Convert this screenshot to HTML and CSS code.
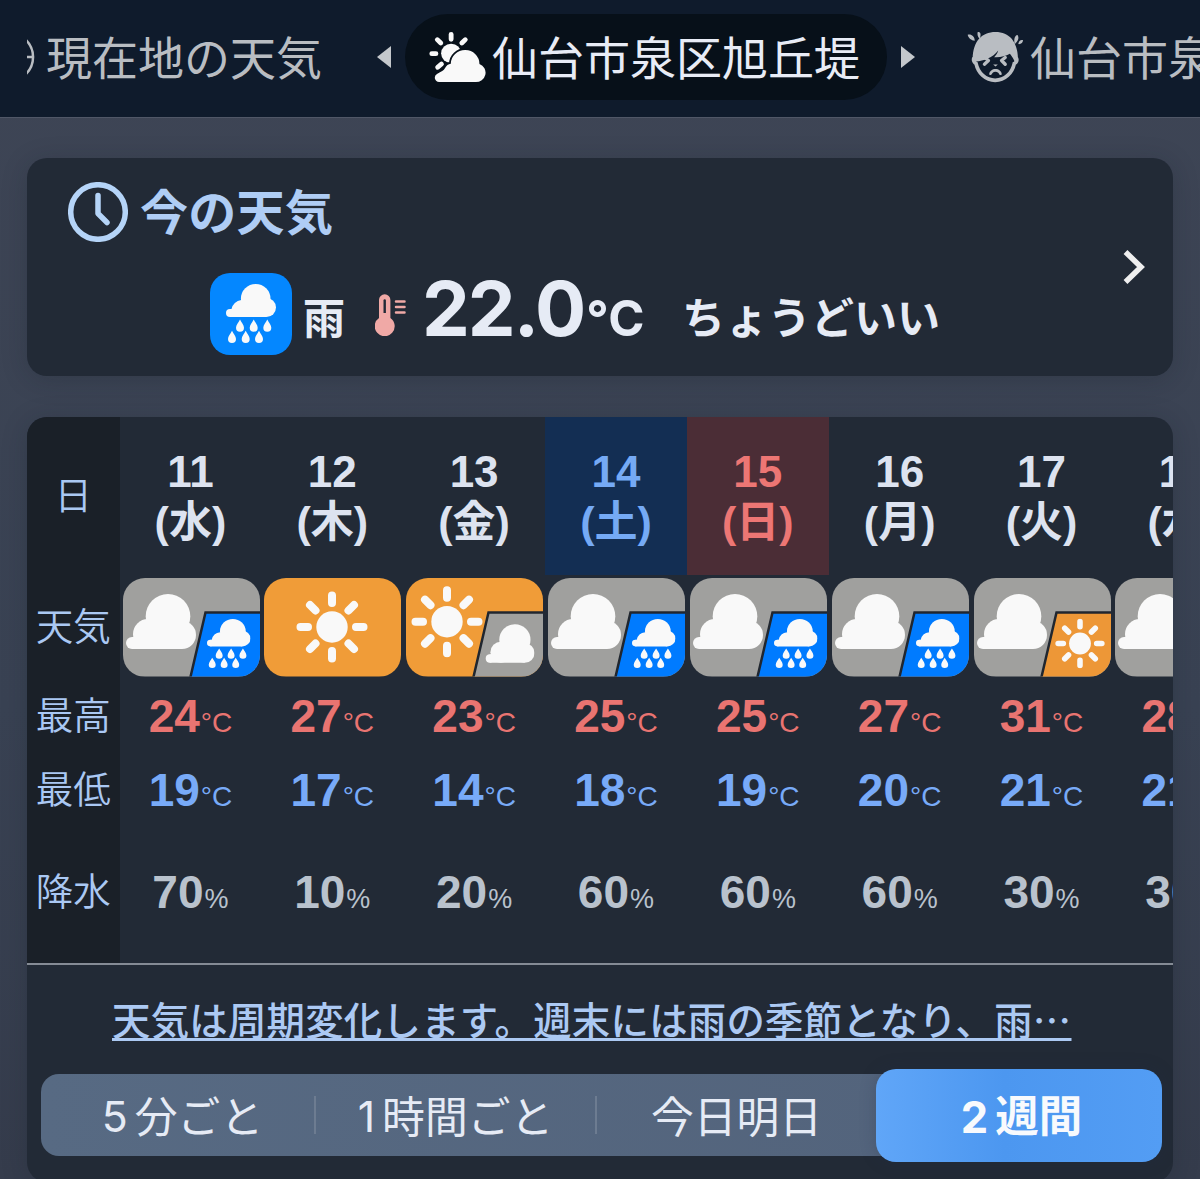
FILE: index.html
```html
<!DOCTYPE html>
<html lang="ja">
<head>
<meta charset="utf-8">
<title>天気</title>
<link rel="stylesheet" href="styles.css">
</head>
<body>
<svg class="defs" aria-hidden="true">
  <symbol id="cloud" viewBox="0 0 70 55">
    <circle cx="42" cy="22.3" r="22.3"/><circle cx="22" cy="40" r="15"/><circle cx="6" cy="49" r="6"/><circle cx="56" cy="41" r="14"/>
    <path d="M6 43h16V30h34v25H6z"/>
  </symbol>
  <symbol id="rain" viewBox="0 0 50 59" preserveAspectRatio="none">
    <circle cx="29.700" cy="14.800" r="14.800"/><circle cx="40.500" cy="23.500" r="9.500"/><circle cx="4" cy="29" r="4"/>
    <path d="M4 25h1.500a11 11 0 0 1 9.700-9h25v17H4z"/>
    <path id="drop" d="M14 35.500c1.500 3 4 5.500 4 8.300a4 4 0 0 1-8 0c0-2.800 2.500-5.300 4-8.300z"/>
    <use href="#drop" x="13.700"/><use href="#drop" x="27.300"/>
    <use href="#drop" x="-8" y="11.200"/><use href="#drop" x="5.700" y="11.200"/><use href="#drop" x="19" y="11.200"/>
  </symbol>
  <symbol id="sun" viewBox="0 0 72 72">
    <circle cx="36" cy="36" r="15.700"/>
    <path fill="none" stroke="#f9f9f9" stroke-width="8" stroke-linecap="round" d="M36 4.500v7.500M36 60v7.500M4.500 36H12M60 36h7.500M14 14l5.500 5.500M52.500 52.500L58 58M58 14l-5.500 5.500M19.500 52.500L14 58"/>
  </symbol>
  <symbol id="cloud-rain" viewBox="0 0 137 98.500">
    <path fill="#a0a09e" d="M0 0h137v99H0z"/><use href="#cloud" x="3" y="16" width="70" height="55"/>
    <path fill="#007bff" stroke="#20262f" stroke-width="2.500" d="M82.500 34.500H140V101H67z"/><use href="#rain" x="84" y="41" width="43.500" height="49"/>
  </symbol>
  <symbol id="cloud-sun" viewBox="0 0 137 98.500">
    <path fill="#a0a09e" d="M0 0h137v99H0z"/><use href="#cloud" x="3" y="16" width="70" height="55"/>
    <path fill="#ed9737" stroke="#20262f" stroke-width="2.500" d="M82.500 34.500H140V101H67z"/><use href="#sun" x="81" y="40.500" width="50" height="50"/>
  </symbol>
  <symbol id="sun-cloud" viewBox="0 0 137 98.500">
    <path fill="#f09c38" d="M0 0h137v99H0z"/><use href="#sun" x="5" y="7.700" width="72" height="72"/>
    <path fill="#a0a09e" stroke="#20262f" stroke-width="2.500" d="M82.500 34.500H140V101H67z"/><use href="#cloud" x="79.500" y="46" width="49" height="39"/>
  </symbol>
  <symbol id="sunny" viewBox="0 0 137 98.500">
    <path fill="#f09c38" d="M0 0h137v99H0z"/><use href="#sun" x="32" y="13" width="72" height="72"/>
  </symbol>
</svg>

<header class="places">
  <div class="place place-prev">
    <svg class="place-edge" viewBox="0 0 8 36"><path d="M-1 1a24 24 0 0 1 0 34M0 18h7"/></svg>
    <span>現在地の天気</span>
  </div>
  <svg class="arrow" viewBox="0 0 14 22"><path d="M0 11L14 0v22z"/></svg>
  <div class="place place-current">
    <svg class="place-icon" viewBox="0 0 168 156" preserveAspectRatio="none">
      <circle cx="67" cy="67" r="29" fill="#f9f9f9"/>
      <path stroke="#f9f9f9" stroke-width="14" stroke-linecap="round" d="M67 10v15M11 68h12M27 26l10 10M108 26L98 36M39 99l-11 10"/>
      <path fill="#f9f9f9" stroke="#071019" stroke-width="10" paint-order="stroke" d="M32 153a13 13 0 0 1-6-24c13-7 20-10 23-17c4-9 10-13 17-14A41 41 0 1 1 149 99a28 28 0 0 1-12 54z"/>
    </svg>
    <span>仙台市泉区旭丘堤</span>
  </div>
  <svg class="arrow" viewBox="0 0 14 22"><path d="M14 11L0 0v22z"/></svg>
  <div class="place place-next">
    <svg class="face" viewBox="0 0 170 155">
      <path fill="none" stroke="#b9bdc2" stroke-width="11" d="M21 80c-4 8 2 15 6 17c6 28 28 50 57 50s51-22 57-50c6-3 10-10 6-17"/>
      <path fill="#b9bdc2" d="M17 83C18 30 44 3 85 3s66 28 67 80l-10 8c-4-9-9-17-14-23c-14 8-29 11-47 10c5-5 10-12 12-20c-16 22-43 31-67 33z"/>
      <path fill="none" stroke="#b9bdc2" stroke-width="10" stroke-linejoin="round" stroke-linecap="round" d="M52 79l12 9l-12 11M114 79l-11 9l11 11"/>
      <path fill="#b9bdc2" d="M66 130c2-22 36-22 38 0c-5 3-8 0-10-5c-6-5-13-5-18 0c-2 5-6 8-10 5z"/>
      <path fill="#b9bdc2" d="M2 11C12 7 24 17 23 29C13 28 4 21 2 11zM32 3c8-2 11 5 6 21c-6-6-8-14-6-21zM142 40c-3-16 1-28 9-28c5 9 2 17-9 28zM153 39c1-9 7-14 14-12c0 8-6 13-14 12zM78 100h14l-7 6z"/>
    </svg>
    <span>仙台市泉</span>
  </div>
</header>

<main>
  <section class="card now">
    <div class="now-body">
      <h1 class="now-title">
        <svg class="clock" viewBox="0 0 60 60"><circle cx="30" cy="30" r="27.300"/><path d="M30 13.500v18l9 9"/></svg>
        <span>今の天気</span>
      </h1>
      <div class="now-row">
        <div class="now-icon"><svg viewBox="0 0 50 59" fill="#f9f9f9"><use href="#rain" width="50" height="59"/></svg></div>
        <span class="now-kind">雨</span>
        <svg class="thermo" viewBox="0 0 31 42"><path fill="#f0a9a6" d="M4 6a5.700 5.700 0 0 1 11.400 0v18a10 10 0 1 1-11.400 0z"/><path fill="#222a36" d="M8.500 6.500a1.200 1.200 0 0 1 2.400 0V19H8.500z"/><path stroke="#f0a9a6" stroke-width="2.500" stroke-linecap="round" d="M21 7.500h8.500M21 13h8.500M21 18.500h8.500"/></svg>
        <span class="now-temp">22.0<small>°C</small></span>
        <span class="now-feel">ちょうどいい</span>
      </div>
    </div>
    <svg class="chevron" viewBox="0 0 22 36"><path d="M2.500 3L18 18L2.500 33"/></svg>
  </section>

  <section class="card forecast">
    <div class="table">
      <div class="labels"><span>日</span><span>天気</span><span>最高</span><span>最低</span><span>降水</span></div>
      <div class="day"><div class="date">11<br><span>(水)</span></div><svg class="chip"><use href="#cloud-rain"/></svg><p class="hi">24<small>°C</small></p><p class="lo">19<small>°C</small></p><p class="pop">70<small>%</small></p></div>
      <div class="day"><div class="date">12<br><span>(木)</span></div><svg class="chip"><use href="#sunny"/></svg><p class="hi">27<small>°C</small></p><p class="lo">17<small>°C</small></p><p class="pop">10<small>%</small></p></div>
      <div class="day"><div class="date">13<br><span>(金)</span></div><svg class="chip"><use href="#sun-cloud"/></svg><p class="hi">23<small>°C</small></p><p class="lo">14<small>°C</small></p><p class="pop">20<small>%</small></p></div>
      <div class="day"><div class="date sat">14<br><span>(土)</span></div><svg class="chip"><use href="#cloud-rain"/></svg><p class="hi">25<small>°C</small></p><p class="lo">18<small>°C</small></p><p class="pop">60<small>%</small></p></div>
      <div class="day"><div class="date sun">15<br><span>(日)</span></div><svg class="chip"><use href="#cloud-rain"/></svg><p class="hi">25<small>°C</small></p><p class="lo">19<small>°C</small></p><p class="pop">60<small>%</small></p></div>
      <div class="day"><div class="date">16<br><span>(月)</span></div><svg class="chip"><use href="#cloud-rain"/></svg><p class="hi">27<small>°C</small></p><p class="lo">20<small>°C</small></p><p class="pop">60<small>%</small></p></div>
      <div class="day"><div class="date">17<br><span>(火)</span></div><svg class="chip"><use href="#cloud-sun"/></svg><p class="hi">31<small>°C</small></p><p class="lo">21<small>°C</small></p><p class="pop">30<small>%</small></p></div>
      <div class="day"><div class="date">18<br><span>(水)</span></div><svg class="chip"><use href="#cloud-sun"/></svg><p class="hi">28<small>°C</small></p><p class="lo">21<small>°C</small></p><p class="pop">30<small>%</small></p></div>
    </div>
    <a class="comment">天気は周期変化します。週末には雨の季節となり、雨…</a>
    <nav class="tabs">
      <span class="tab tab-5m"><b>5</b>分ごと</span>
      <span class="tab tab-1h"><b>1</b>時間ごと</span>
      <span class="tab tab-today">今日明日</span>
      <span class="tab tab-active"><b>2</b>週間</span>
    </nav>
  </section>
</main>
</body>
</html>
```
FILE: styles.css
```css
* { box-sizing: border-box; }
html, body { height: 1179px; overflow: hidden; }
body {
  margin: 0;
  background: linear-gradient(#3e4555, #394253 60%, #353c4c);
  color: #e6ebf5;
  font-family: "Noto Sans CJK JP", sans-serif;
}
svg { display: block; flex: none; }
.defs { position: absolute; width: 0; height: 0; }
p { margin: 0; }

.places {
  display: flex;
  align-items: center;
  height: 118px;
  padding: 0 0 4px 27px;
  overflow: hidden;
  background: #0f1b2c;
  border-bottom: 1.500px solid #505767;
  color: #b9bdc2;
  font-size: 46px;
  line-height: 60px;
  white-space: nowrap;
}
.place { display: flex; align-items: center; flex: none; }
.place span { margin-top: -4px; }
.place-prev { width: 350px; }
.place-edge { width: 8px; height: 36px; margin-right: 11px; overflow: hidden; fill: none; stroke: #b9bdc2; stroke-width: 2.500; }
.arrow { width: 14px; height: 22px; fill: #c4c8cc; }
.place-current {
  width: 482px;
  height: 86px;
  margin: 0 14px;
  padding-left: 23px;
  border-radius: 43px;
  background: #071019;
  color: #e8ecf6;
}
.place-icon { width: 58px; height: 52px; margin-right: 6px; }
.place-next { margin-left: 52px; }
.face { width: 57px; height: 52px; margin-right: 6px; }

main { padding: 40px 27px 0; }
.card { border-radius: 20px; background: #222a36; box-shadow: 0 4px 26px rgba(20, 26, 36, .22); }
.now { display: flex; align-items: center; justify-content: space-between; height: 218px; padding: 0 28px 0 41px; }
.now-body { height: 171px; }
.now-title { display: flex; align-items: center; gap: 12px; height: 60px; margin: 0; color: #afcdf5; font-size: 48px; font-weight: 600; line-height: 60px; }
.now-title span { margin-top: -6px; letter-spacing: .3px; }
.clock { width: 60px; height: 60px; fill: none; stroke: #b5d4f8; stroke-width: 5.500; stroke-linecap: round; stroke-linejoin: round; }
.now-row { display: flex; height: 82px; margin: 31px 0 0 142px; font-weight: 600; white-space: nowrap; }
.now-icon { display: flex; justify-content: center; align-items: center; width: 82px; height: 82px; border-radius: 20px; background: #0487ff; }
.now-icon svg { width: 50px; height: 59px; }
.now-kind { width: 83px; padding-left: 11px; font-size: 42px; line-height: 86px; }
.thermo { width: 31px; height: 42px; margin-top: 21px; }
.now-temp { width: 276px; padding-left: 16px; font: 700 76px/70px "Inter", sans-serif; letter-spacing: -2px; }
.now-temp small { margin-left: 2px; font-size: 49px; letter-spacing: .500px; }
.now-feel { font-size: 43px; line-height: 84px; }
.chevron { width: 22px; height: 36px; fill: none; stroke: #efefef; stroke-width: 5.500; }

.forecast { height: 765px; margin-top: 41px; overflow: hidden; }
.table { display: grid; grid-template-columns: 92.500px repeat(8, 141.850px); height: 548px; border-bottom: 2.500px solid #858b95; overflow: hidden; }
.labels { display: grid; grid-template-rows: 158px 104px 74px 74px 130px; align-items: center; justify-items: center; margin-top: -3px; background: #1a2028; color: #aac8f3; font-size: 37.500px; font-weight: 350; line-height: 50px; }
.date { height: 158px; padding-top: 30px; color: #dde3f0; font: 700 44px/50px "Liberation Sans", "Noto Sans CJK JP", sans-serif; text-align: center; }
.date span { font-size: 43px; font-weight: 600; line-height: 46px; }
.sat { background: #132e53; color: #75aaf5; }
.sun { background: #4b2d36; color: #ed7674; }
.chip { width: 137px; height: 98.500px; margin: 3px auto 2.500px 3px; border-radius: 22px; fill: #f9f9f9; }
.hi, .lo, .pop { height: 74px; font: 700 46px/74px "Liberation Sans", sans-serif; text-align: center; }
.hi small, .lo small { margin-left: 1px; font-size: 28px; font-weight: 400; line-height: 0; }
.pop small { margin-left: 1px; font-size: 27px; font-weight: 400; line-height: 0; }
.hi { color: #e97471; }
.lo { color: #78aaf8; }
.pop { margin-top: 28px; color: #b9c2cd; }

.comment {
  display: block;
  height: 109px;
  padding: 23px 0 0 85px;
  color: #acc9f3;
  font-size: 38.400px;
  font-weight: 500;
  letter-spacing: .250px;
  line-height: 60px;
  white-space: nowrap;
  text-decoration: underline;
  text-decoration-thickness: 2.500px;
  text-underline-offset: 3px;
}
.tabs { display: flex; align-items: center; width: 1121px; height: 82px; margin-left: 14px; border-radius: 18px; background: linear-gradient(90deg, #576a83, #52627a); font-size: 42.800px; line-height: 60px; white-space: nowrap; }
.tab { display: flex; align-items: center; justify-content: center; height: 38px; padding-bottom: 2px; }
.tab b { margin: 5px 7px 0 0; font-family: "Inter", sans-serif; font-weight: inherit; }
.tab-5m { width: 275px; padding-left: 10px; border-right: 2px solid #6d7c91; }
.tab-1h { width: 281px; border-right: 2px solid #6d7c91; }
.tab-today { width: 279px; }
.tab-active { width: 286px; height: 93px; padding-left: 5px; border-radius: 20px; background: linear-gradient(90deg, #60a6f8, #4c97f0 45%, #539df4); box-shadow: 0 0 16px rgba(30, 45, 70, .25); color: #f8fafd; font-size: 43.500px; font-weight: 700; }
```
